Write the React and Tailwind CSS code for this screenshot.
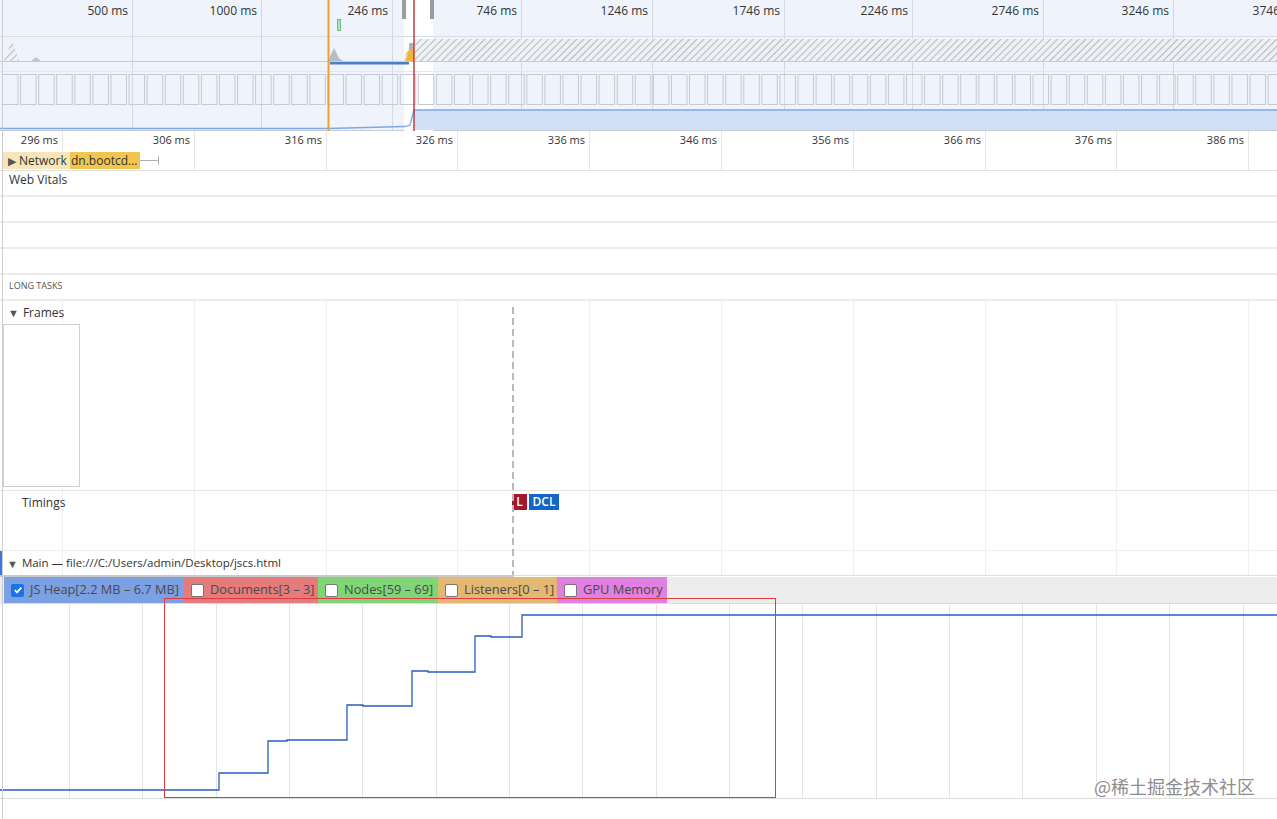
import React from 'react'

const topCols = [133, 129, 131, 129, 131, 132, 128, 131, 130, 131]
const topLabels = ['500 ms', '1000 ms', '246 ms', '746 ms', '1246 ms', '1746 ms', '2246 ms', '2746 ms', '3246 ms', '3746 ms']
const rulerCols = [63, 132, 132, 131, 132, 132, 132, 132, 131, 132, 60]
const chartCols = [70, ...Array(17).fill(73.35)]

function Columns({ widths, line = 'border-[#e8e8e8]' }) {
  return (
    <div className="pointer-events-none absolute inset-0 flex overflow-hidden">
      {widths.map((w, i) => (
        <div key={i} className={`h-full shrink-0 border-r ${line}`} style={{ width: w }} />
      ))}
    </div>
  )
}

function Overview() {
  const boxes = Array.from({ length: 71 }, (_, i) => 2 + i * 18.08)
  return (
    <div className="relative h-[131px] border-b border-[#c6ccd6] bg-[#eef3fc]">
      <div className="flex h-full overflow-hidden">
        {topCols.map((w, i) => (
          <div
            key={i}
            className="h-full shrink-0 border-r border-[#d2d9e6] pr-[4px] pt-[2px] text-right text-[12px] whitespace-nowrap text-[#333]"
            style={{ width: w }}
          >
            {topLabels[i]}
          </div>
        ))}
      </div>
      <svg className="absolute inset-0" width="1277" height="131" viewBox="0 0 1277 131">
        <defs>
          <pattern id="hatch" width="5" height="5" patternUnits="userSpaceOnUse" patternTransform="rotate(45)">
            <rect width="5" height="5" fill="#eef0f3" />
            <line x1="0" y1="0" x2="0" y2="5" stroke="#b5b8bf" strokeWidth="2" />
          </pattern>
        </defs>
        <rect x="404" y="0" width="29" height="131" fill="#ffffff" />
        <line x1="0" y1="36.5" x2="1277" y2="36.5" stroke="#d8dde7" />
        <line x1="0" y1="61.5" x2="1277" y2="61.5" stroke="#c7cbd3" />
        <line x1="0" y1="71.5" x2="1277" y2="71.5" stroke="#e2e7f0" />
        <rect x="415" y="39" width="862" height="22" fill="url(#hatch)" />
        <polygon points="4,61 12,40 19,61" fill="url(#hatch)" />
        <polygon points="31,61 36,57 41,61" fill="#c3c6cc" />
        <polygon points="328,61 334,48 339,58 343,61" fill="#b9bcc3" />
        <polygon points="403,61 408,48 414,43 414,61" fill="url(#hatch)" />
        <rect x="409" y="43" width="5" height="18" fill="#b1b3ba" />
        <polygon points="405,61 409,50 414,48 414,61" fill="#f2b53a" />
        <rect x="337.5" y="19.5" width="3" height="11" fill="#aee3b7" stroke="#6cbf7c" />
        <rect x="330" y="62" width="79" height="2.5" fill="#4a7fc9" />
        {boxes.map((x, i) => (
          <rect key={i} x={x + 0.5} y="74.5" width="15.5" height="30" fill="none" stroke="#c4cad6" />
        ))}
        <polygon points="414,110 1277,110 1277,130 414,130" fill="#d2e0f7" />
        <polyline
          points="0,128.5 328,128.5 405,126.5 410,125 414,110 1277,110"
          fill="none"
          stroke="#7fa6e6"
          strokeWidth="1.3"
        />
        <line x1="328.5" y1="0" x2="328.5" y2="131" stroke="#f0a02c" strokeWidth="2" />
        <line x1="414" y1="0" x2="414" y2="131" stroke="#b3202a" strokeWidth="1.3" />
        <rect x="402" y="0" width="4" height="19" fill="#9b9b9b" />
        <rect x="430" y="0" width="4" height="19" fill="#9b9b9b" />
      </svg>
    </div>
  )
}

function Checkbox({ checked }) {
  if (checked) {
    return (
      <span className="flex h-[13px] w-[13px] shrink-0 items-center justify-center rounded-[2px] bg-[#1a73e8]">
        <svg width="10" height="10" viewBox="0 0 10 10">
          <path d="M1.8 5.2 L4 7.4 L8.3 2.6" fill="none" stroke="#fff" strokeWidth="1.8" />
        </svg>
      </span>
    )
  }
  return <span className="h-[13px] w-[13px] shrink-0 rounded-[2px] border border-[#767676] bg-white" />
}

const counters = [
  { label: 'JS Heap[2.2 MB – 6.7 MB]', w: 'w-[180px]', bg: 'bg-[#7ba0e4]', checked: true },
  { label: 'Documents[3 – 3]', w: 'w-[134px]', bg: 'bg-[#e47c7b]' },
  { label: 'Nodes[59 – 69]', w: 'w-[120px]', bg: 'bg-[#80d677]' },
  { label: 'Listeners[0 – 1]', w: 'w-[119px]', bg: 'bg-[#e2b873]' },
  { label: 'GPU Memory', w: 'w-[110px]', bg: 'bg-[#e080e0]' },
]

export default function App() {
  return (
    <div className="relative h-[819px] w-[1277px] overflow-hidden bg-white font-['Open_Sans',sans-serif] text-[#333]">
      <Overview />

      {/* ruler + network */}
      <div className="relative">
        <Columns widths={rulerCols} line="border-[#e6e6e6]" />
        <div className="relative flex h-[19px] overflow-hidden">
          {rulerCols.map((w, i) => (
            <div
              key={i}
              className="shrink-0 pr-[5px] pt-[1px] text-right text-[11px] leading-[16px] whitespace-nowrap text-[#333]"
              style={{ width: w }}
            >
              {i < 10 ? `${296 + i * 10} ms` : ''}
            </div>
          ))}
        </div>
        <div className="relative flex h-[21px] items-start border-b border-[#e2e2e2] pt-[2px] pl-[3px]">
          <div className="flex h-[17px] w-[137px] items-center bg-[#f0c550] text-[12px]">
            <div className="flex h-full w-[67px] items-center gap-[3px] bg-[#f7e6b8] pl-[5px] text-[#333]">
              <span className="text-[11px] leading-none text-[#555]">▶</span>
              <span>Network</span>
            </div>
            <span className="pl-[1px] whitespace-nowrap text-[#333]">dn.bootcd...</span>
          </div>
          <div className="mt-[8px] h-px w-[18px] bg-[#b0b0b0]" />
          <div className="mt-[4px] h-[9px] w-px bg-[#b0b0b0]" />
        </div>
      </div>

      {/* web vitals + long tasks */}
      <div className="h-[26px] border-b-2 border-[#ececec] pl-[9px] text-[12px] leading-[18px]">Web Vitals</div>
      <div className="h-[26px] border-b-2 border-[#ececec]" />
      <div className="h-[26px] border-b-2 border-[#ececec]" />
      <div className="h-[26px] border-b-2 border-[#ececec]" />
      <div className="h-[26px] border-b-2 border-[#ececec] pt-[5px] pl-[9px] text-[9px] leading-[12px] text-[#555]">
        LONG TASKS
      </div>

      {/* frames / timings / main */}
      <div className="relative">
        <Columns widths={rulerCols} line="border-[#efefef]" />
        <div className="relative h-[190px] border-b border-[#e6e6e6] pl-[3px]">
          <div className="flex h-[23px] items-center gap-[4px] pl-[5px] text-[12px]">
            <span className="text-[11px] leading-none text-[#555]">▼</span>
            <span>Frames</span>
          </div>
          <div className="h-[163px] w-[77px] border border-[#cfcfcf] bg-white" />
        </div>
        <div className="relative h-[60px] border-b border-[#eeeeee]">
          <div className="pt-[3px] pl-[22px] text-[12px] leading-[18px]">Timings</div>
          <div className="absolute top-[3px] left-[512px] flex gap-[2px] text-[12px] leading-[16px] font-semibold text-white">
            <span className="h-[16px] w-[15px] bg-[#a3172b] text-center">L</span>
            <span className="h-[16px] w-[30px] bg-[#1565c6] text-center">DCL</span>
          </div>
        </div>
        <div className="relative flex h-[24px] items-center gap-[4px] border-l-2 border-[#3a78e0] pl-[5px] text-[11.5px]">
          <span className="text-[11px] leading-none text-[#555]">▼</span>
          <span>Main — file:///C:/Users/admin/Desktop/jscs.html</span>
        </div>
        <div className="pointer-events-none absolute top-[6px] bottom-0 left-[512px] w-[2px] bg-[repeating-linear-gradient(to_bottom,#c0b4c0_0px,#c0b4c0_7px,transparent_7px,transparent_11px)]" />
      </div>

      {/* scroll strip */}
      <div className="flex h-[2px]">
        <div className="w-[514px] bg-[#cacaca]" />
        <div className="flex-1 border-t border-[#dddddd]" />
      </div>

      {/* counters */}
      <div className="flex h-[26px] bg-[#ededed] pl-[4px]">
        {counters.map((c) => (
          <div
            key={c.label}
            className={`flex h-full shrink-0 items-center gap-[6px] pl-[7px] text-[12.8px] whitespace-nowrap text-[#4a4a4a] ${c.w} ${c.bg}`}
          >
            <Checkbox checked={c.checked} />
            <span>{c.label}</span>
          </div>
        ))}
      </div>

      {/* memory chart */}
      <div className="relative h-[196px] border-y border-[#dcdcdc]">
        <Columns widths={chartCols} line="border-[#e4e4e4]" />
        <svg className="absolute inset-0" width="1277" height="196" viewBox="0 0 1277 196">
          <path
            d="M0,186 H219 V169 H268 V137 H287 V136 H347 V101 H363 V102 H412 V67 H428 V68 H475 V32 H491 V33 H522 V11 H1277"
            fill="none"
            stroke="#2b5cbe"
            strokeWidth="1.3"
          />
        </svg>
        <div className="absolute top-[-6px] left-[164px] z-10 h-[200px] w-[612px] border border-[#e0393e]" />
        <div className="absolute right-[22px] bottom-[1px] font-['Noto_Sans_CJK_SC',sans-serif] text-[18px] leading-[22px] text-[#8e8e8e]">
          @稀土掘金技术社区
        </div>
      </div>

      <div className="pointer-events-none absolute top-0 bottom-0 left-[2px] w-px bg-[#cdcdcd]" />
    </div>
  )
}
